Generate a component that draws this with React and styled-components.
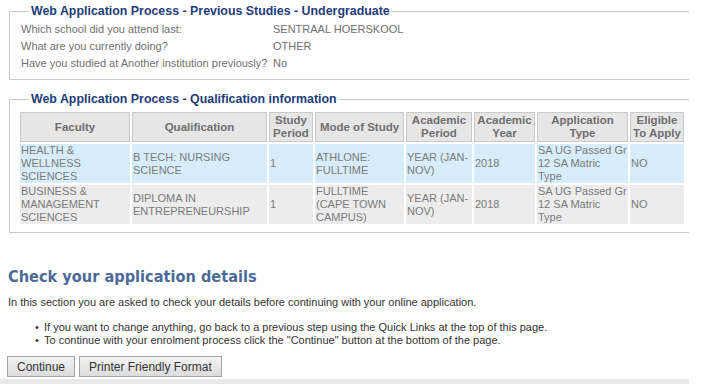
import React from 'react';
import styled, {createGlobalStyle} from 'styled-components';

const GlobalStyle = createGlobalStyle`
  html, body {
    margin: 0;
    padding: 0;
    background: #ffffff;
  }
  body {
    font-family: "Liberation Sans", Arial, sans-serif;
    font-size: 11px;
    color: #333333;
  }
`;

const Page = styled.div`
  width: 705px;
  height: 384px;
  overflow: hidden;
  position: relative;
`;

const Fieldset = styled.fieldset`
  margin: ${props => props.$top}px 16px 0 9px;
  padding: ${props => props.$pad};
  border: 1px solid #c9c9c9;
  border-right: none;
  min-width: 0;
`;

const Legend = styled.legend`
  margin-left: ${props => props.$offset}px;
  padding: 0 2px;
  font-size: 12.4px;
  line-height: 16px;
  font-weight: bold;
  color: #1f3c7a;
`;

const InfoRow = styled.div`
  display: grid;
  grid-template-columns: 252px 1fr;
  height: 17px;
  line-height: 17px;
  color: #707070;
`;

const Table = styled.table`
  width: 668px;
  table-layout: fixed;
  border-collapse: separate;
  border-spacing: 2px;
  font-size: 11px;
`;

const Col = styled.col`
  width: ${props => props.$w}px;
`;

const Th = styled.th`
  background: #e6e6e6;
  border: 1px solid #c9c9c9;
  color: #6e6e6e;
  font-weight: bold;
  font-size: 11.5px;
  line-height: 13px;
  height: 26px;
  padding: 1px 0;
  text-align: center;
  vertical-align: middle;
`;

const Td = styled.td`
  background: ${props => (props.$hl ? '#d7edfb' : '#ececec')};
  color: #7a7a7a;
  line-height: 13px;
  height: 39px;
  padding: 0 1px;
  vertical-align: middle;
  text-align: left;
`;

const Heading = styled.h2`
  margin: 34px 0 0 8px;
  font-family: "DejaVu Sans Condensed", "DejaVu Sans", Verdana, sans-serif;
  font-stretch: condensed;
  font-size: 16.2px;
  line-height: 20px;
  font-weight: bold;
  color: #4c6a98;
`;

const Para = styled.p`
  margin: 9px 0 0 8px;
  line-height: 13px;
  color: #333333;
`;

const BulletList = styled.ul`
  margin: 12px 0 0 0;
  padding: 0 0 0 44px;
  line-height: 13px;
  color: #333333;
`;

const Bullet = styled.li`
  list-style: none;
  position: relative;
  &::before {
    content: '•';
    position: absolute;
    left: -9px;
  }
`;

const Buttons = styled.div`
  display: flex;
  gap: 4px;
  margin: 9px 0 0 7px;
`;

const Button = styled.button`
  height: 21px;
  padding: 0 9px;
  font-family: "Liberation Sans", Arial, sans-serif;
  font-size: 12px;
  color: #333333;
  background: linear-gradient(#f4f4f4, #dcdcdc);
  border: 1px solid #a3a3a3;
  border-radius: 0;
`;

const FooterStrip = styled.div`
  position: absolute;
  left: 0;
  bottom: 0;
  width: 689px;
  height: 5px;
  background: #e9e9e9;
`;

const previous = [
  ['Which school did you attend last:', 'SENTRAAL HOERSKOOL'],
  ['What are you currently doing?', 'OTHER'],
  ['Have you studied at Another institution previously?', 'No'],
];

const columns = [
  [110, 'Faculty'],
  [135, 'Qualification'],
  [44, 'Study Period'],
  [89, 'Mode of Study'],
  [66, 'Academic Period'],
  [61, 'Academic Year'],
  [91, 'Application Type'],
  [54, 'Eligible To Apply'],
];

const qualifications = [
  [
    'HEALTH & WELLNESS SCIENCES',
    'B TECH: NURSING SCIENCE',
    '1',
    'ATHLONE: FULLTIME',
    'YEAR (JAN-NOV)',
    '2018',
    'SA UG Passed Gr 12 SA Matric Type',
    'NO',
  ],
  [
    'BUSINESS & MANAGEMENT SCIENCES',
    'DIPLOMA IN ENTREPRENEURSHIP',
    '1',
    'FULLTIME (CAPE TOWN CAMPUS)',
    'YEAR (JAN-NOV)',
    '2018',
    'SA UG Passed Gr 12 SA Matric Type',
    'NO',
  ],
];

export default function App() {
  return (
    <Page>
      <GlobalStyle />
      <Fieldset $top={3} $pad="2px 10px 7px 11px">
        <Legend $offset={8}>Web Application Process - Previous Studies - Undergraduate</Legend>
        {previous.map(([label, value]) => (
          <InfoRow key={label}>
            <span>{label}</span>
            <span>{value}</span>
          </InfoRow>
        ))}
      </Fieldset>
      <Fieldset $top={11} $pad="3px 0 6px 8px">
        <Legend $offset={11}>Web Application Process - Qualification information</Legend>
        <Table>
          <colgroup>
            {columns.map(([w, name]) => (
              <Col key={name} $w={w} />
            ))}
          </colgroup>
          <thead>
            <tr>
              {columns.map(([, name]) => (
                <Th key={name}>{name}</Th>
              ))}
            </tr>
          </thead>
          <tbody>
            {qualifications.map((row, i) => (
              <tr key={i}>
                {row.map((cell, j) => (
                  <Td key={j} $hl={i === 0}>
                    {cell}
                  </Td>
                ))}
              </tr>
            ))}
          </tbody>
        </Table>
      </Fieldset>
      <Heading>Check your application details</Heading>
      <Para>
        In this section you are asked to check your details before continuing with your online
        application.
      </Para>
      <BulletList>
        <Bullet>
          If you want to change anything, go back to a previous step using the Quick Links at the
          top of this page.
        </Bullet>
        <Bullet>
          To continue with your enrolment process click the "Continue" button at the bottom of the
          page.
        </Bullet>
      </BulletList>
      <Buttons>
        <Button>Continue</Button>
        <Button>Printer Friendly Format</Button>
      </Buttons>
      <FooterStrip />
    </Page>
  );
}
